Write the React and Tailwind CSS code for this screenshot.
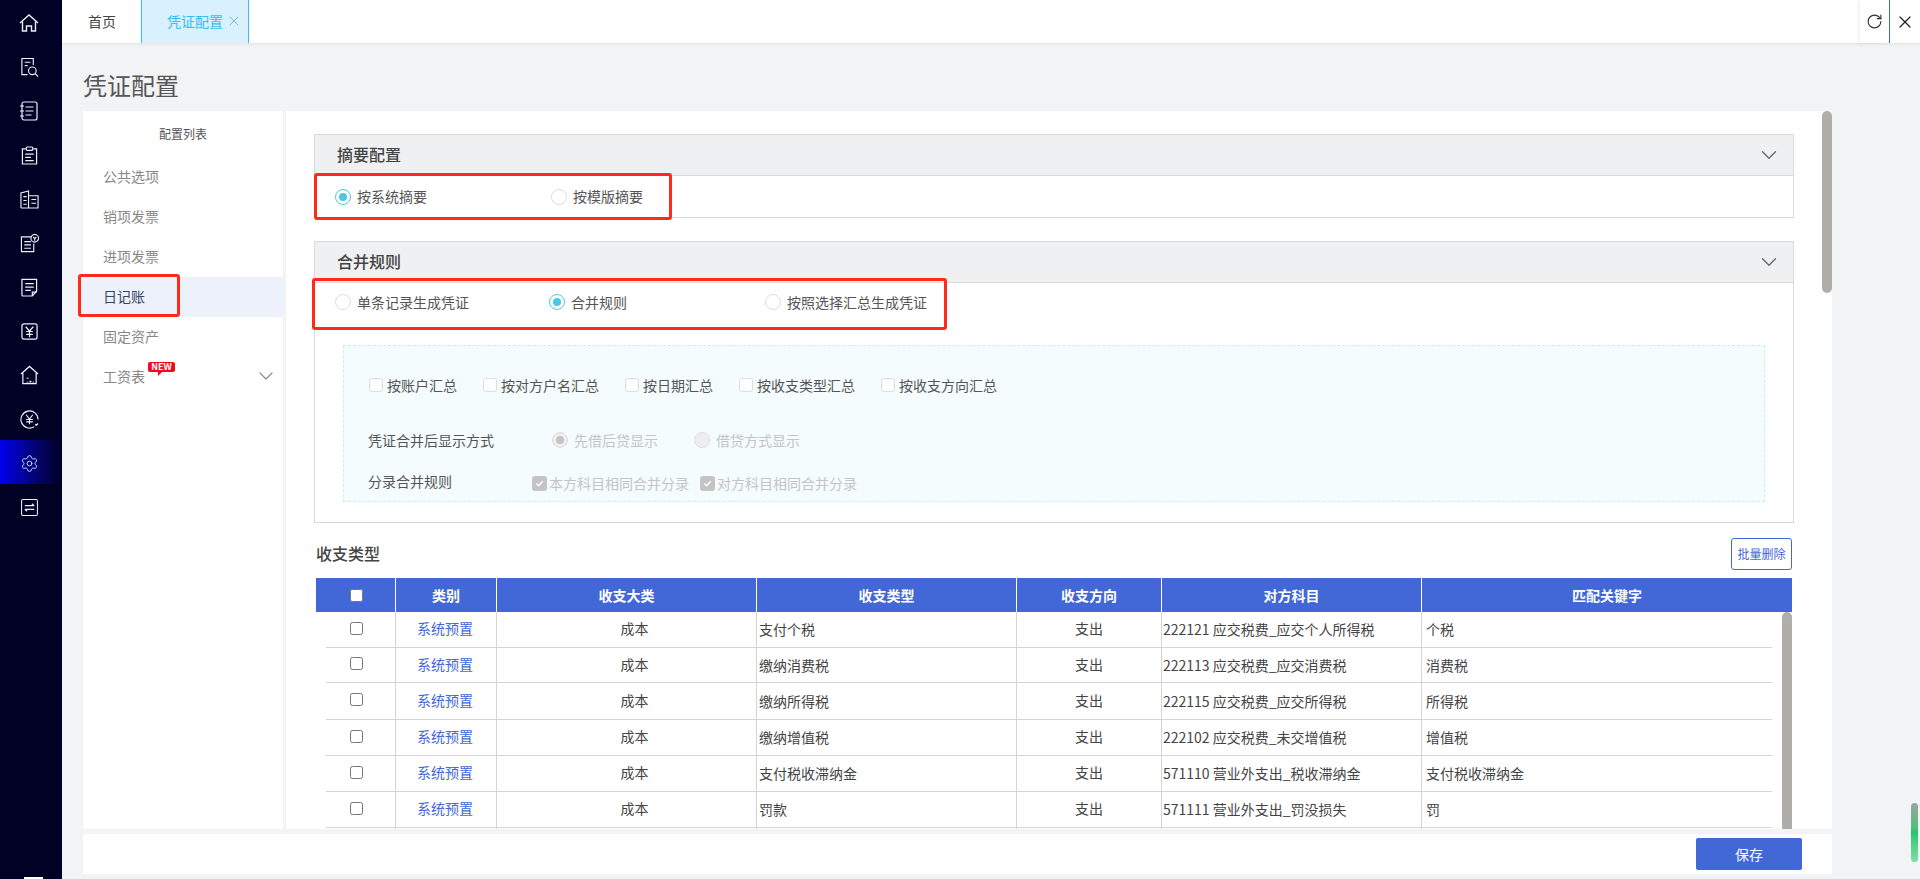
import React from "react";
import { ChevronDown, X, RotateCw, Settings } from "lucide-react";

const navIcons = [
  <svg viewBox="0 0 20 18" className="w-[20px] h-[18px]" fill="none" stroke="currentColor" strokeWidth="1.4"><path d="M1 9 10 1l9 8" /><path d="M3.500 7.500V17h4v-5h5v5h4V7.500" /></svg>,
  <svg viewBox="0 0 20 20" className="w-[19px] h-[20px]" fill="none" stroke="currentColor" strokeWidth="1.2"><path d="M8 18H2V1h12v7" /><path d="M5 5h6M5 8.500h3" /><circle cx="13" cy="14" r="4" /><path d="m16 17 3 3" /></svg>,
  <svg viewBox="0 0 18 20" className="w-[18px] h-[20px]" fill="none" stroke="currentColor" strokeWidth="1.2"><rect x="2" y="1" width="15" height="18" rx="2" /><path d="M5.500 6h8M5.500 10h8M5.500 14h6M0 5h4M0 10h4M0 15h4" /></svg>,
  <svg viewBox="0 0 18 20" className="w-[17px] h-[19px]" fill="none" stroke="currentColor" strokeWidth="1.3"><path d="M5 3H1.500v16h15V3H13" /><rect x="5.500" y="1" width="7" height="3.500" rx="1" /><path d="M4.500 8.500h9M4.500 12h6M4.500 15.500h9" /></svg>,
  <svg viewBox="0 0 20 20" className="w-[19px] h-[19px]" fill="none" stroke="currentColor" strokeWidth="1.2"><path d="M1 19V3l8-2v18M9 6h10v13H1" /><path d="M3.500 7H7M3.500 11H7M3.500 15H7M12 10h5M12 14h5" /></svg>,
  <svg viewBox="0 0 20 20" className="w-[19px] h-[19px]" fill="none" stroke="currentColor" strokeWidth="1.2"><path d="M12 3H1.500v15.500h13V10" /><path d="M4.500 8h7M4.500 11.500h7M4.500 15h7" /><circle cx="15.500" cy="4.500" r="4" /><path d="M14 3l1.500 2 1.500-2M15.500 5v2" /></svg>,
  <svg viewBox="0 0 18 20" className="w-[17px] h-[19px]" fill="none" stroke="currentColor" strokeWidth="1.3"><path d="M12 19H2a1 1 0 0 1-1-1V1.500h15.500V14L12 19Z" /><path d="M4.500 6h9M4.500 9.500h9M4.500 13h6" /><path d="M12 19v-4h4.500" /></svg>,
  <svg viewBox="0 0 18 18" className="w-[17px] h-[17px]" fill="none" stroke="currentColor" strokeWidth="1.3"><rect x="1" y="1" width="16" height="16" rx="2" /><path d="m5 4 4 4.500L13 4M9 8.500V15M5.500 9h7M5.500 12h7" /></svg>,
  <svg viewBox="0 0 20 20" className="w-[19px] h-[20px]" fill="none" stroke="currentColor" strokeWidth="1.3"><path d="M1 9 10 1l9 8" /><path d="M3 7.500V19h14V7.500" /><path d="M8 18v-1M8 14v-1M11 18v-2M14 18v-1" strokeWidth="2" /></svg>,
  <svg viewBox="0 0 20 20" className="w-[19px] h-[19px]" fill="none" stroke="currentColor" strokeWidth="1.2"><path d="M19 10a9 9 0 1 0-4 7.500" /><path d="m6.500 5 3.500 4.500L13.500 5M10 9.500V15M6.500 10h7M6.500 12.500h7" /><path d="m16 15 1 1.200 2-2" /></svg>,
  <Settings className="w-[19px] h-[19px]" strokeWidth={1.1} />,
  <svg viewBox="0 0 18 18" className="w-[17px] h-[17px]" fill="none" stroke="currentColor" strokeWidth="1.1"><rect x="0.600" y="0.600" width="16.800" height="16.800" rx="1.500" /><path d="M4 7h10M11.500 5 14 7M4 11h10M6.500 13 4 11" strokeWidth="1.300" /></svg>,
];

const rows = [
  { h: "h-[36px]", type: "支付个税", account: "222121 应交税费_应交个人所得税", key: "个税" },
  { h: "h-[35px]", type: "缴纳消费税", account: "222113 应交税费_应交消费税", key: "消费税" },
  { h: "h-[37px]", type: "缴纳所得税", account: "222115 应交税费_应交所得税", key: "所得税" },
  { h: "h-[36px]", type: "缴纳增值税", account: "222102 应交税费_未交增值税", key: "增值税" },
  { h: "h-[36px]", type: "支付税收滞纳金", account: "571110 营业外支出_税收滞纳金", key: "支付税收滞纳金" },
  { h: "h-[36px]", type: "罚款", account: "571111 营业外支出_罚没损失", key: "罚" },
];

function Radio({ checked, disabled, label, className }) {
  return (
    <label className={"flex items-center gap-[6px] " + className}>
      <span
        className={
          "w-[16px] h-[16px] rounded-full border flex items-center justify-center shrink-0 " +
          (disabled ? "bg-[#eeeeee] border-[#dddddd]" : checked ? "border-[#4cc9e2] bg-white" : "border-[#dddddd] bg-white")
        }
      >
        {checked && <span className={"w-[8px] h-[8px] rounded-full " + (disabled ? "bg-[#c4c4c4]" : "bg-[#4cc9e2]")} />}
      </span>
      <span className={disabled ? "text-[#c4c4c4]" : "text-[#555555]"}>{label}</span>
    </label>
  );
}

function Section({ title, children }) {
  return (
    <div className="border border-[#d9d9d9]">
      <div className="h-[41px] bg-[#eff0f2] border-b border-[#d9d9d9] pl-[22px] pr-[11px] flex items-center justify-between">
        <span className="text-[16px] font-medium text-[#444444] pb-[2px]">{title}</span>
        <ChevronDown className="w-[26px] h-[26px] text-[#666666]" strokeWidth={1.2} />
      </div>
      {children}
    </div>
  );
}

function GrayCheck({ label, className }) {
  return (
    <span className={"flex items-center gap-[2px] text-[#c4c4c4] " + className}>
      <span className="w-[15px] h-[15px] rounded-[3px] bg-[#c4c4c4] flex items-center justify-center">
        <svg viewBox="0 0 10 10" className="w-[9px] h-[9px]" fill="none" stroke="white" strokeWidth="1.600"><path d="m1.500 5 2.500 2.500 4.500-5" /></svg>
      </span>
      {label}
    </span>
  );
}

function Sidebar() {
  return (
    <aside className="w-[62px] shrink-0 bg-[#010125] text-[#eef0fa] relative">
      {navIcons.map((icon, i) => (
        <div
          key={i}
          className={
            "h-[44px] flex items-center justify-center pr-[4px] pt-[2px] " +
            (i === 10 ? "bg-gradient-to-r from-[#0000f0] to-[#010125]" : "")
          }
        >
          {icon}
        </div>
      ))}
      <div className="absolute bottom-0 left-[24px] w-[19px] h-[2px] bg-white" />
    </aside>
  );
}

function MenuList() {
  const items = ["公共选项", "销项发票", "进项发票", "日记账", "固定资产"];
  return (
    <div className="w-[200px] shrink-0 bg-white">
      <div className="h-[46px] flex items-center justify-center text-[12px] text-[#555555]">配置列表</div>
      {items.map(item => (
        <div
          key={item}
          className={
            "h-[40px] flex items-center pl-[20px] pb-[2px] " +
            (item === "日记账" ? "bg-[#edf1fc] text-[#3a4660]" : "text-[#888888]")
          }
        >
          {item}
        </div>
      ))}
      <div className="h-[40px] flex items-center pl-[20px] pr-[5px] pb-[2px] justify-between text-[#888888] relative">
        工资表
        <span className="absolute left-[65px] top-[5px] w-[27px] h-[10px] bg-[#f5081e] rounded-[2px] text-white text-[9px] leading-[10px] font-bold text-center">
          NEW
          <span className="absolute left-[10px] top-[9px] w-[5px] h-[5px] bg-[#f5081e] [clip-path:polygon(0_0,100%_0,0_100%)]" />
        </span>
        <ChevronDown className="w-[24px] h-[24px]" strokeWidth={1.1} />
      </div>
    </div>
  );
}

function FeeTable() {
  const head = ["类别", "收支大类", "收支类型", "收支方向", "对方科目", "匹配关键字"];
  return (
    <div className="ml-[2px] w-[1476px] relative">
      <div className="grid grid-cols-[79px_101px_260px_260px_145px_260px_1fr] h-[34px] bg-[#4267d6] text-white font-bold text-center items-stretch">
        <div className="flex items-center justify-center pl-[2px]">
          <input type="checkbox" readOnly />
        </div>
        {head.map(h => (
          <div key={h} className="border-l border-white flex items-center justify-center">
            {h}
          </div>
        ))}
      </div>
      <div className="w-[1446px] ml-[10px] grid grid-cols-[69px_101px_260px_260px_145px_260px_1fr] text-[#444444]">
        {rows.map(r => (
          <React.Fragment key={r.account}>
            <div className={r.h + " border-b border-[#d4d4d4] flex items-center justify-center pb-[3px] pr-[8px]"}>
              <input type="checkbox" readOnly />
            </div>
            <div className={r.h + " border-b border-l border-[#d4d4d4] flex items-center justify-center text-[#4267d6] pb-[2px] pr-[2px]"}>系统预置</div>
            <div className={r.h + " border-b border-l border-[#d4d4d4] flex items-center justify-center pl-[16px] pb-[2px]"}>成本</div>
            <div className={r.h + " border-b border-l border-[#d4d4d4] flex items-center pl-[2px]"}>{r.type}</div>
            <div className={r.h + " border-b border-l border-[#d4d4d4] flex items-center justify-center pb-[2px]"}>支出</div>
            <div className={r.h + " border-b border-l border-[#d4d4d4] flex items-center pl-[1px]"}>{r.account}</div>
            <div className={r.h + " border-b border-l border-[#d4d4d4] flex items-center pl-[4px]"}>{r.key}</div>
          </React.Fragment>
        ))}
        {/* next row is cut off by the panel */}
        <div className="h-[36px]" />
        <div className="h-[36px] border-l border-[#d4d4d4]" />
        <div className="h-[36px] border-l border-[#d4d4d4]" />
        <div className="h-[36px] border-l border-[#d4d4d4]" />
        <div className="h-[36px] border-l border-[#d4d4d4]" />
        <div className="h-[36px] border-l border-[#d4d4d4]" />
        <div className="h-[36px] border-l border-[#d4d4d4]" />
      </div>
      <div className="absolute right-0 top-[34px] w-[10px] h-[300px] rounded-[5px] bg-[#b0aeab]" />
    </div>
  );
}

export default function App() {
  return (
    <div
      className="w-[1920px] h-[879px] flex overflow-hidden bg-[#f2f3f5] text-[14px] text-[#444444] relative"
      style={{ fontFamily: '"Noto Sans CJK SC", "Noto Sans", sans-serif' }}
    >
      <Sidebar />
      <main className="flex-1 flex flex-col min-w-0">
        <div className="h-[43px] shrink-0 bg-white flex shadow-[0_1px_3px_rgba(0,0,0,0.08)]">
          <div className="w-[79px] flex items-center pl-[26px] text-[#444444] pb-[1px]">首页</div>
          <div className="w-[108px] bg-[#d9f1fe] border-x border-[#3dbdf0] flex items-center pl-[25px] gap-[3px] text-[#33bdf2] pb-[1px]">
            凭证配置
            <X className="w-[16px] h-[16px] text-[#55a8d8]" strokeWidth={1.2} />
          </div>
          <div className="flex-1" />
          <div className="w-[30px] flex items-center justify-center border-r border-[#4267d6] shadow-[-2px_0_4px_rgba(0,0,0,0.06)]">
            <RotateCw className="w-[17px] h-[17px] text-[#333333]" strokeWidth={1.6} />
          </div>
          <div className="w-[30px] flex items-center justify-center">
            <X className="w-[20px] h-[20px] text-[#222222]" strokeWidth={1.5} />
          </div>
        </div>

        <div className="h-[68px] shrink-0 flex items-center pl-[21px] pt-[16px] text-[24px] text-[#555555]">凭证配置</div>

        <div className="h-[718px] shrink-0 ml-[21px] w-[1749px] flex gap-[3px]">
          <MenuList />
          <div className="flex-1 bg-white relative overflow-hidden pl-[28px] pt-[23px]">
            <div className="absolute right-0 top-0 w-[10px] h-[182px] rounded-[5px] bg-[#b0aeab]" />
            <div className="w-[1480px]">
              <Section title="摘要配置">
                <div className="h-[41px] pl-[20px] flex items-center">
                  <Radio checked label="按系统摘要" className="w-[216px]" />
                  <Radio label="按模版摘要" />
                </div>
              </Section>
              <div className="h-[23px]" />
              <Section title="合并规则">
                <div className="h-[38px] pl-[20px] flex items-center">
                  <Radio label="单条记录生成凭证" className="w-[214px]" />
                  <Radio checked label="合并规则" className="w-[216px]" />
                  <Radio label="按照选择汇总生成凭证" />
                </div>
                <div className="mx-[28px] mt-[24px] mb-[20px] h-[157px] bg-[#f4fcfe] border border-dashed border-[#c5eef5] pl-[24px] pt-[29px]">
                  <div className="flex items-center gap-[26px] h-[20px] pl-[1px] text-[#555555]">
                    {["按账户汇总", "按对方户名汇总", "按日期汇总", "按收支类型汇总", "按收支方向汇总"].map(t => (
                      <span key={t} className="flex items-center gap-[4px]">
                        <span className="w-[14px] h-[14px] rounded-[3px] bg-white border border-[#dddddd]" />
                        {t}
                      </span>
                    ))}
                  </div>
                  <div className="flex items-center h-[20px] mt-[35px]">
                    <span className="w-[184px] text-[#555555]">凭证合并后显示方式</span>
                    <Radio disabled checked label="先借后贷显示" className="w-[142px]" />
                    <Radio disabled label="借贷方式显示" />
                  </div>
                  <div className="flex items-start h-[20px] mt-[23px]">
                    <span className="w-[164px] text-[#555555] leading-[16px]">分录合并规则</span>
                    <GrayCheck label="本方科目相同合并分录" className="w-[168px]" />
                    <GrayCheck label="对方科目相同合并分录" />
                  </div>
                </div>
              </Section>
              <div className="flex items-center justify-between h-[32px] mt-[15px] mb-[8px] pl-[2px] pr-[2px]">
                <span className="text-[16px] font-medium text-[#444444] pb-[3px]">收支类型</span>
                <button className="w-[61px] h-[32px] border border-[#4267d6] rounded-[3px] bg-white text-[#4267d6] text-[12px]">批量删除</button>
              </div>
              <FeeTable />
            </div>
          </div>
        </div>

        <div className="mt-[5px] ml-[21px] w-[1749px] h-[40px] bg-white flex items-center justify-end pr-[30px]">
          <button className="w-[106px] h-[32px] bg-[#4267d6] rounded-[2px] text-white">保存</button>
        </div>
      </main>

      <div className="absolute left-[1911px] top-[803px] w-[7px] h-[59px] rounded-full bg-gradient-to-b from-[#9aa0a6] via-[#22c66e] to-[#7be0a8]" />

      {/* review marks drawn over the page */}
      <div className="absolute left-[78px] top-[274px] w-[102px] h-[43px] border-[3px] border-[#ff2a1a] rounded-[3px]" />
      <div className="absolute left-[314px] top-[173px] w-[358px] h-[47px] border-[3px] border-[#ff2a1a] rounded-[3px]" />
      <div className="absolute left-[312px] top-[278px] w-[635px] h-[52px] border-[3px] border-[#ff2a1a] rounded-[3px]" />
    </div>
  );
}
